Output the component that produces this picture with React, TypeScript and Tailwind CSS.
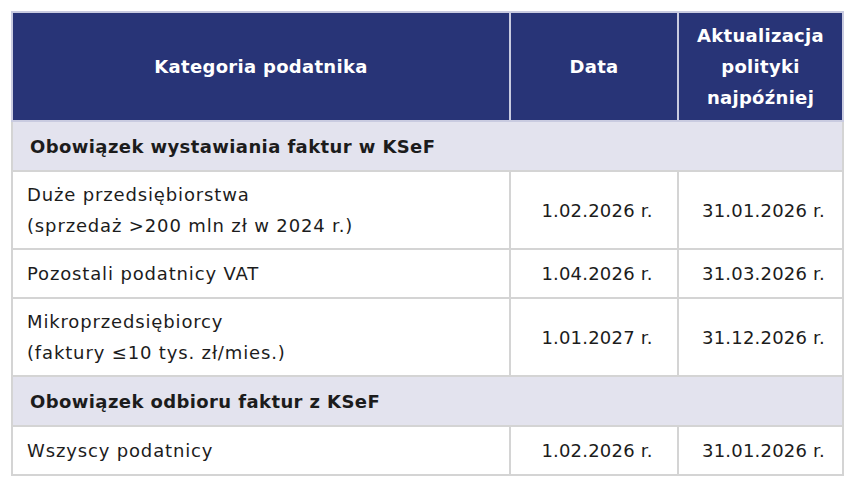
export default function App() {
  const rows: ({ section: string } | { label: string[]; date: string; update: string })[] = [
    { section: 'Obowiązek wystawiania faktur w KSeF' },
    { label: ['Duże przedsiębiorstwa', '(sprzedaż >200 mln zł w 2024 r.)'], date: '1.02.2026 r.', update: '31.01.2026 r.' },
    { label: ['Pozostali podatnicy VAT'], date: '1.04.2026 r.', update: '31.03.2026 r.' },
    { label: ['Mikroprzedsiębiorcy', '(faktury ≤10 tys. zł/mies.)'], date: '1.01.2027 r.', update: '31.12.2026 r.' },
    { section: 'Obowiązek odbioru faktur z KSeF' },
    { label: ['Wszyscy podatnicy'], date: '1.02.2026 r.', update: '31.01.2026 r.' },
  ];

  return (
    <div className="bg-white w-[854px] h-[492px] pt-[11px] pl-[11px] font-['DejaVu_Sans',sans-serif] text-[#1c1c1c]">
      <table className="border-collapse w-[831px] table-fixed">
        <colgroup>
          <col className="w-[498px]" />
          <col className="w-[168px]" />
          <col className="w-[165px]" />
        </colgroup>
        <thead>
          <tr className="bg-[#283477] text-white font-bold text-[18px] tracking-[0.3px] leading-[31px] h-[109px]">
            <th className="border-2 border-[#c9cbe0] text-center">Kategoria podatnika</th>
            <th className="border-2 border-[#c9cbe0] text-center">Data</th>
            <th className="border-2 border-[#c9cbe0] text-center px-0">
              Aktualizacja
              <br />
              polityki
              <br />
              najpóźniej
            </th>
          </tr>
        </thead>
        <tbody>
          {rows.map((row, idx) =>
            'section' in row ? (
              <tr key={idx} className="bg-[#e3e3ee] h-[50px]">
                <td colSpan={3} className="border-2 border-[#d4d4d4] pl-[17px] font-bold text-[18px] tracking-[0.4px]">
                  {row.section}
                </td>
              </tr>
            ) : (
              <tr key={idx} className={row.label.length > 1 ? 'h-[78px]' : 'h-[49px]'}>
                <td className="border-2 border-[#d4d4d4] pl-[14px] text-[18px] tracking-[0.85px] leading-[31px]">
                  {row.label.map((l, i) => (
                    <div key={i}>{l}</div>
                  ))}
                </td>
                <td className="border-2 border-[#d4d4d4] text-center pl-[6px] text-[18px] tracking-[0.2px]">{row.date}</td>
                <td className="border-2 border-[#d4d4d4] text-center pl-[6px] text-[18px] tracking-[0.2px]">{row.update}</td>
              </tr>
            )
          )}
        </tbody>
      </table>
    </div>
  );
}
